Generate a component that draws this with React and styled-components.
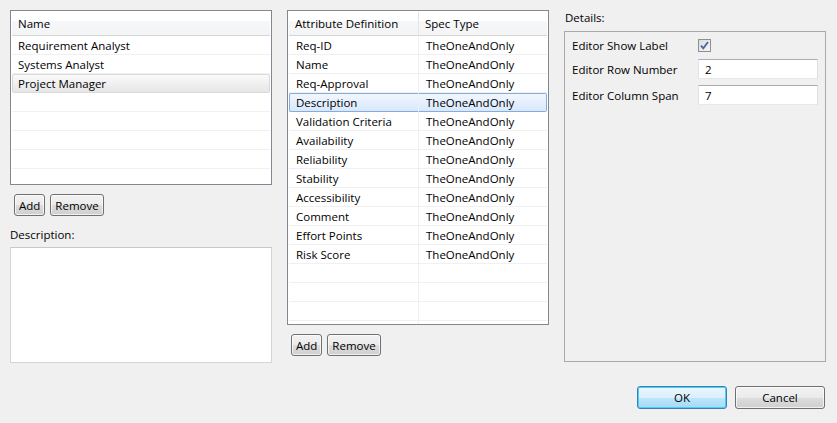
import React from 'react'
import styled, { createGlobalStyle } from 'styled-components'

const GlobalStyle = createGlobalStyle`
    html, body {
        margin: 0;
        padding: 0;
        background: #f0f0f0;
    }
    body {
        font-family: 'Open Sans', 'Noto Sans', sans-serif;
        font-size: 11.5px;
        color: #000;
    }
`

const roles = ['Requirement Analyst', 'Systems Analyst', 'Project Manager']

const attributes = [
    'Req-ID',
    'Name',
    'Req-Approval',
    'Description',
    'Validation Criteria',
    'Availability',
    'Reliability',
    'Stability',
    'Accessibility',
    'Comment',
    'Effort Points',
    'Risk Score',
]

export default function App() {
    return (
        <>
            <GlobalStyle />
            <Dialog>
                <Columns>
                    <Column>
                        <Table height={175} cols="1fr">
                            <HeaderCell>Name</HeaderCell>
                            {roles.map((r, i) => (
                                <Cell key={r} selected={i === 2}>
                                    {r}
                                </Cell>
                            ))}
                            {Array.from({ length: 5 }).map((_, i) => (
                                <Cell key={'e' + i} />
                            ))}
                        </Table>
                        <ButtonRow>
                            <SmallButton>Add</SmallButton>
                            <SmallButton>Remove</SmallButton>
                        </ButtonRow>
                        <Label>Description:</Label>
                        <TextArea />
                    </Column>

                    <Column>
                        <Table height={315} cols="130px 1fr">
                            <HeaderCell divider>Attribute Definition</HeaderCell>
                            <HeaderCell>Spec Type</HeaderCell>
                            {attributes.map((a, i) => (
                                <Row key={a} selected={i === 3}>
                                    <RowCell divider>{a}</RowCell>
                                    <RowCell>TheOneAndOnly</RowCell>
                                </Row>
                            ))}
                            {Array.from({ length: 4 }).map((_, i) => (
                                <Row key={'e' + i}>
                                    <RowCell divider />
                                    <RowCell />
                                </Row>
                            ))}
                        </Table>
                        <ButtonRow>
                            <SmallButton>Add</SmallButton>
                            <SmallButton>Remove</SmallButton>
                        </ButtonRow>
                    </Column>

                    <Column>
                        <DetailsLabel>Details:</DetailsLabel>
                        <GroupBox>
                            <FieldRow>
                                <FieldLabel>Editor Show Label</FieldLabel>
                                <CheckBox>
                                    <svg width="9" height="9" viewBox="0 0 9 9">
                                        <path
                                            d="M1 4.6 L3.3 7.4 L8 1"
                                            fill="none"
                                            stroke="#4b62a8"
                                            strokeWidth="1.8"
                                        />
                                    </svg>
                                </CheckBox>
                            </FieldRow>
                            <FieldRow>
                                <FieldLabel>Editor Row Number</FieldLabel>
                                <Input defaultValue="2" />
                            </FieldRow>
                            <FieldRow>
                                <FieldLabel>Editor Column Span</FieldLabel>
                                <Input defaultValue="7" />
                            </FieldRow>
                        </GroupBox>
                    </Column>
                </Columns>

                <Footer>
                    <DialogButton primary>OK</DialogButton>
                    <DialogButton>Cancel</DialogButton>
                </Footer>
            </Dialog>
        </>
    )
}

const Dialog = styled.div`
    width: 837px;
    height: 423px;
    box-sizing: border-box;
    padding: 10px 12px 0 10px;
    display: flex;
    flex-direction: column;
`

const Columns = styled.div`
    display: grid;
    grid-template-columns: 262px 262px 262px;
    column-gap: 15px;
`

const Column = styled.div`
    display: flex;
    flex-direction: column;
`

const Table = styled.div`
    height: ${({ height }) => height}px;
    box-sizing: border-box;
    border: 1px solid #828790;
    background: #fff;
    padding: 1px;
    display: grid;
    grid-template-columns: ${({ cols }) => cols};
    grid-auto-rows: 19px;
    grid-template-rows: 24px;
    overflow: hidden;
    align-content: start;
`

const HeaderCell = styled.div`
    display: flex;
    align-items: center;
    padding: 0 6px;
    background: linear-gradient(#ffffff 0%, #ffffff 40%, #f6f7f8 41%, #f3f4f6 100%);
    border-bottom: 1px solid #d5d5d5;
    border-right: ${({ divider }) => (divider ? '1px solid #e5e5e5' : 'none')};
    box-sizing: border-box;
    white-space: nowrap;
`

const Cell = styled.div`
    display: flex;
    align-items: center;
    padding: 0 6px;
    box-sizing: border-box;
    white-space: nowrap;
    border-bottom: 1px solid #f0f0f0;
    ${({ selected }) =>
        selected &&
        `
        background: linear-gradient(#fafafa, #e6e6e6);
        border: 1px solid #d9d9d9;
        border-radius: 2px;
        padding: 0 5px;
    `}
`

const Row = styled.div`
    display: contents;

    & > div {
        ${({ selected }) =>
            selected &&
            `
            background: linear-gradient(#f1f7fe, #d8e8fc);
            border-top: 1px solid #84acdd;
            border-bottom: 1px solid #84acdd;
        `}
    }
    & > div:first-child {
        ${({ selected }) =>
            selected &&
            `
            border-left: 1px solid #84acdd;
            border-radius: 2px 0 0 2px;
            padding-left: 6px;
        `}
    }
    & > div:last-child {
        ${({ selected }) =>
            selected &&
            `
            border-right: 1px solid #84acdd;
            border-radius: 0 2px 2px 0;
        `}
    }
`

const RowCell = styled.div`
    display: flex;
    align-items: center;
    padding: 0 7px;
    box-sizing: border-box;
    white-space: nowrap;
    border-bottom: 1px solid #f0f0f0;
    border-right: ${({ divider }) => (divider ? '1px solid #f0f0f0' : 'none')};
`

const ButtonRow = styled.div`
    display: flex;
    gap: 5px;
    margin-top: 9px;
    padding-left: 4px;
`

const SmallButton = styled.button`
    font: inherit;
    height: 22px;
    padding: 0 4px;
    border: 1px solid #707070;
    border-radius: 3px;
    background: linear-gradient(#f2f2f2 0%, #ebebeb 50%, #dddddd 51%, #cfcfcf 100%);
    box-shadow: inset 0 0 0 1px rgba(255, 255, 255, 0.7);
    color: #000;
    cursor: pointer;
`

const Label = styled.div`
    margin-top: 11px;
    line-height: 16px;
`

const TextArea = styled.div`
    margin-top: 4px;
    height: 114px;
    background: #fff;
    border: 1px solid #d5d5d5;
    border-top-color: #c8c8c8;
`

const DetailsLabel = styled.div`
    line-height: 16px;
    padding-left: 1px;
`

const GroupBox = styled.div`
    margin-top: 5px;
    height: 331px;
    box-sizing: border-box;
    border: 1px solid #a9a9a9;
    padding: 6px 7px;
    display: flex;
    flex-direction: column;
    gap: 6px;
`

const FieldRow = styled.div`
    display: grid;
    grid-template-columns: 126px 1fr;
    align-items: center;
    min-height: 14px;
`

const FieldLabel = styled.div`
    white-space: nowrap;
`

const CheckBox = styled.div`
    width: 11px;
    height: 11px;
    border: 1px solid #8e8f8f;
    background: linear-gradient(135deg, #dcdcdc, #f6f6f6);
    display: flex;
    align-items: center;
    justify-content: center;
`

const Input = styled.input`
    font: inherit;
    height: 20px;
    box-sizing: border-box;
    width: 120px;
    border: 1px solid #abadb3;
    border-color: #abadb3 #dbdfe6 #e3e9ef #e2e3ea;
    padding: 0 6px;
    background: #fff;
    outline: none;
`

const Footer = styled.div`
    margin-top: auto;
    margin-bottom: 14px;
    display: flex;
    justify-content: flex-end;
    gap: 8px;
`

const DialogButton = styled.button`
    font: inherit;
    width: 90px;
    height: 23px;
    border-radius: 3px;
    cursor: pointer;
    color: #000;
    border: 1px solid ${({ primary }) => (primary ? '#3c7fb1' : '#707070')};
    background: ${({ primary }) =>
        primary
            ? 'linear-gradient(#eaf6fd 0%, #d9f0fc 50%, #bee6fd 51%, #a7d9f5 100%)'
            : 'linear-gradient(#f2f2f2 0%, #ebebeb 50%, #dddddd 51%, #cfcfcf 100%)'};
    box-shadow: ${({ primary }) =>
        primary ? 'inset 0 0 0 1px #48d0f8' : 'inset 0 0 0 1px rgba(255, 255, 255, 0.7)'};
`
